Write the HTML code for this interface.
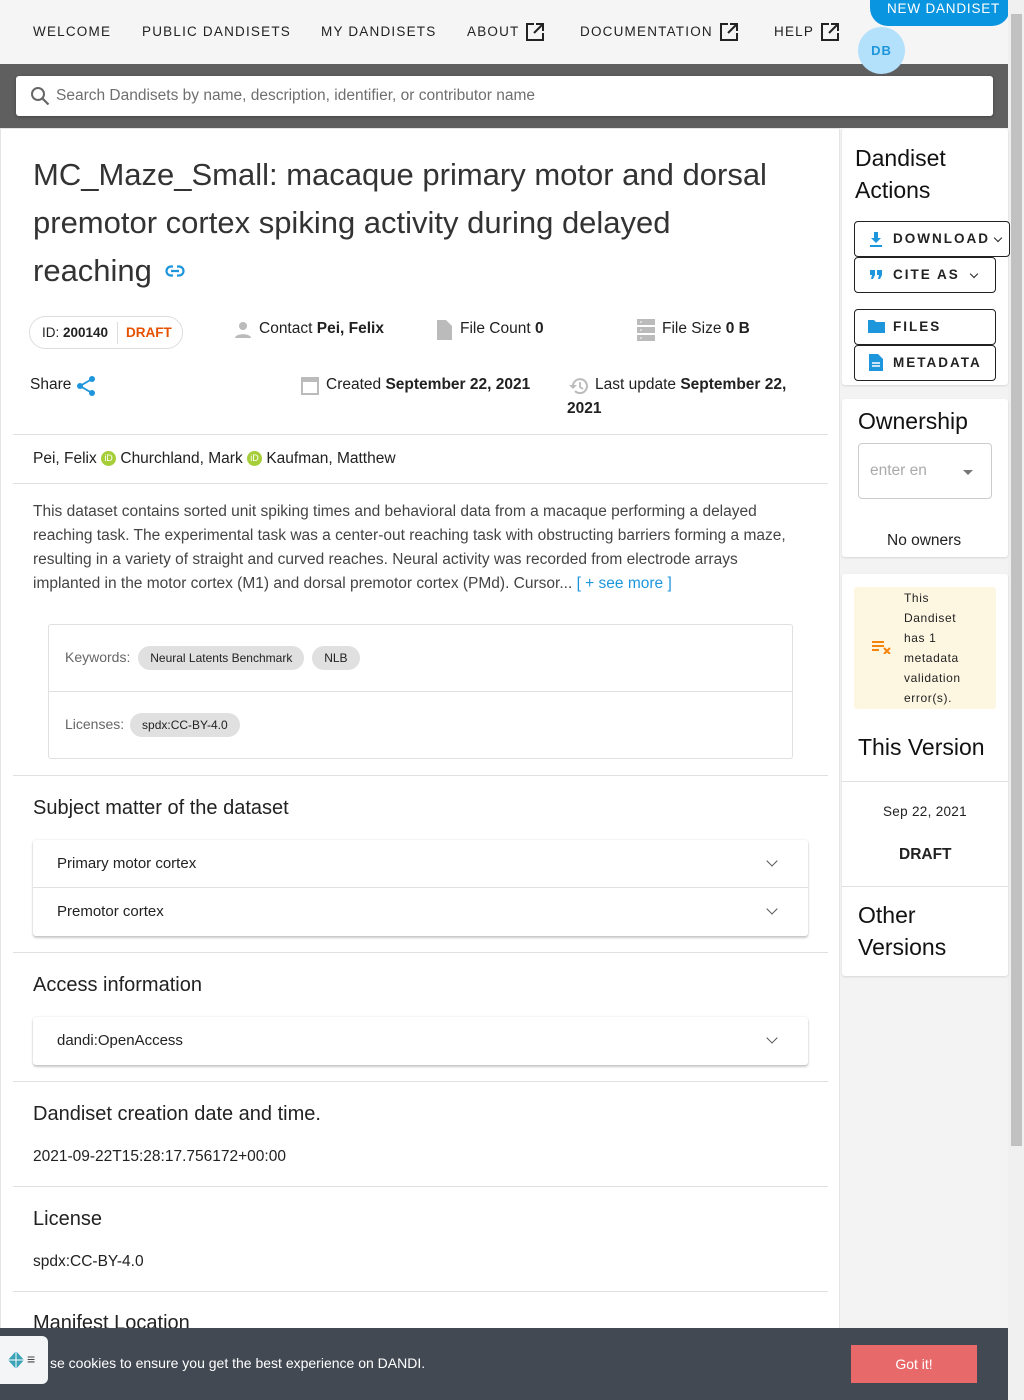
<!DOCTYPE html>
<html><head><meta charset="utf-8"><style>
*{box-sizing:border-box;margin:0;padding:0}
body{width:1024px;height:1400px;overflow:hidden;position:relative;background:#f3f3f3;font-family:"Liberation Sans",sans-serif;color:#212121}
.a{position:absolute;white-space:nowrap}
.nav{top:24px;font-size:13.5px;letter-spacing:1.2px;font-weight:500;color:#222}
.hr{position:absolute;left:13px;width:815px;height:1px;background:#e0e0e0}
.h2{font-size:20px;color:#222}
.exp{position:absolute;left:33px;width:775px;background:#fff;box-shadow:0 2px 2px rgba(0,0,0,.2),0 0 2px rgba(0,0,0,.12);border-radius:3px}
.row{height:48px;position:relative;font-size:15px;line-height:48px;padding-left:24px;color:#222}
.chev{position:absolute;right:32px;top:17px;width:8px;height:8px;border-right:1.5px solid #555;border-bottom:1.5px solid #555;transform:rotate(45deg)}
.chip{display:inline-block;background:#e0e0e0;border-radius:12px;font-size:12px;padding:0 12px;height:24px;line-height:24px;color:#222}
.btn{position:absolute;left:854px;width:142px;height:36px;border:1px solid #222;border-radius:4px;background:#fff;font-size:13.5px;font-weight:bold;letter-spacing:2px;line-height:34px;padding-left:38px;color:#222}
.sch{position:absolute;top:13px;width:6px;height:6px;border-right:1.5px solid #222;border-bottom:1.5px solid #222;transform:rotate(45deg)}
.card{position:absolute;left:842px;width:166px;background:#fff;border-radius:3px;box-shadow:0 1px 2px rgba(0,0,0,.12)}
</style></head><body>
<!-- header -->
<div class="a" style="left:0;top:0;width:1008px;height:64px;background:#f5f5f5"></div>
<div class="a nav" style="left:33px">WELCOME</div>
<div class="a nav" style="left:142px">PUBLIC DANDISETS</div>
<div class="a nav" style="left:321px">MY DANDISETS</div>
<div class="a nav" style="left:467px">ABOUT</div>
<div class="a nav" style="left:580px">DOCUMENTATION</div>
<div class="a nav" style="left:774px">HELP</div>
<svg class="a" style="left:525px;top:22px" width="20" height="20" viewBox="0 0 20 20"><path d="M9 2H2v16h16v-7M11 2h7v7M18 2l-9 9" fill="none" stroke="#222" stroke-width="2"/></svg>
<svg class="a" style="left:719px;top:22px" width="20" height="20" viewBox="0 0 20 20"><path d="M9 2H2v16h16v-7M11 2h7v7M18 2l-9 9" fill="none" stroke="#222" stroke-width="2"/></svg>
<svg class="a" style="left:820px;top:22px" width="20" height="20" viewBox="0 0 20 20"><path d="M9 2H2v16h16v-7M11 2h7v7M18 2l-9 9" fill="none" stroke="#222" stroke-width="2"/></svg>
<!-- search band -->
<div class="a" style="left:0;top:64px;width:1008px;height:64px;background:#5f5f5f"></div>
<div class="a" style="left:16px;top:76px;width:977px;height:40px;background:#fff;border-radius:3px;box-shadow:0 1px 3px rgba(0,0,0,.3)"></div>
<svg class="a" style="left:30px;top:86px" width="20" height="20" viewBox="0 0 20 20"><circle cx="8" cy="8" r="6" fill="none" stroke="#666" stroke-width="2"/><path d="M12.5 12.5l6 6" stroke="#666" stroke-width="2.2"/></svg>
<div class="a" style="left:56px;top:87px;font-size:15.5px;color:#6f6f6f">Search Dandisets by name, description, identifier, or contributor name</div>
<div class="a" style="left:870px;top:-10px;width:140px;height:36px;background:#0a95e0;border-radius:0 0 18px 18px;color:#fff;font-size:13.5px;letter-spacing:.8px;font-weight:500;padding:11px 0 0 17px">NEW DANDISET</div>
<div class="a" style="left:858px;top:27px;width:47px;height:47px;border-radius:50%;background:#b3e0fa;color:#1e96dc;font-size:13px;font-weight:bold;text-align:center;line-height:47px;letter-spacing:1px">DB</div>
<!-- scrollbar -->
<div class="a" style="left:1008px;top:0;width:16px;height:1400px;background:#f0f0f0"></div>
<div class="a" style="left:1011px;top:14px;width:11px;height:1132px;background:#c1c1c1"></div>
<!-- main card -->
<div class="a" style="left:0;top:128px;width:840px;height:1272px;background:#fff;border:1px solid #e4e4e4"></div>
<div class="a" style="left:33px;top:151px;font-size:31px;line-height:48px;color:#333">MC_Maze_Small: macaque primary motor and dorsal<br>premotor cortex spiking activity during delayed<br>reaching</div>
<svg class="a" style="left:165px;top:264px" width="20" height="14" viewBox="0 0 20 14"><rect x="1.5" y="2.5" width="17" height="9" rx="4.5" fill="none" stroke="#1e96dc" stroke-width="2.2"/><path d="M6 7h8" stroke="#1e96dc" stroke-width="2.2"/><rect x="8" y="0" width="4" height="14" fill="#fff"/><path d="M6 7h8" stroke="#1e96dc" stroke-width="2.2"/></svg>
<div class="a" style="left:29px;top:316px;width:154px;height:33px;border:1px solid #ddd;border-radius:17px"></div>
<div class="a" style="left:42px;top:325px;font-size:13.5px;color:#222">ID: <b>200140</b></div>
<div class="a" style="left:117px;top:322px;width:1px;height:22px;background:#ddd"></div>
<div class="a" style="left:126px;top:325px;font-size:13.5px;color:#e65100;font-weight:bold">DRAFT</div>
<svg class="a" style="left:233px;top:320px" width="20" height="20" viewBox="0 0 20 20"><circle cx="10" cy="6" r="4" fill="#bbb"/><path d="M2 18c0-5 16-5 16 0z" fill="#bbb"/></svg>
<div class="a" style="left:259px;top:320px;font-size:15.5px">Contact <b>Pei, Felix</b></div>
<svg class="a" style="left:435px;top:319px" width="18" height="22" viewBox="0 0 18 22"><path d="M2 1h9l6 6v14H2z" fill="#bbb"/></svg>
<div class="a" style="left:460px;top:320px;font-size:15.5px">File Count <b>0</b></div>
<svg class="a" style="left:636px;top:318px" width="20" height="24" viewBox="0 0 20 24"><rect x="1" y="1" width="18" height="6" fill="#bbb"/><rect x="1" y="9" width="18" height="6" fill="#bbb"/><rect x="1" y="17" width="18" height="6" fill="#bbb"/><path d="M4 4h2M4 12h2M4 20h2" stroke="#fff"/></svg>
<div class="a" style="left:662px;top:320px;font-size:15.5px">File Size <b>0 B</b></div>
<div class="a" style="left:30px;top:376px;font-size:15.5px">Share</div>
<svg class="a" style="left:76px;top:375px" width="20" height="22" viewBox="0 0 20 22"><circle cx="16" cy="4" r="3" fill="#1e96dc"/><circle cx="4" cy="11" r="3" fill="#1e96dc"/><circle cx="16" cy="18" r="3" fill="#1e96dc"/><path d="M16 4L4 11l12 7" stroke="#1e96dc" stroke-width="1.8" fill="none"/></svg>
<svg class="a" style="left:300px;top:375px" width="20" height="20" viewBox="0 0 20 20"><rect x="2" y="3" width="16" height="16" fill="none" stroke="#bbb" stroke-width="2"/><rect x="2" y="3" width="16" height="4" fill="#bbb"/></svg>
<div class="a" style="left:326px;top:376px;font-size:15.5px">Created <b>September 22, 2021</b></div>
<svg class="a" style="left:568px;top:376px" width="22" height="20" viewBox="0 0 22 20"><path d="M5 10a7 7 0 1 1 2 5" fill="none" stroke="#bbb" stroke-width="2"/><path d="M1 9l4 4 4-4z" fill="#bbb"/><path d="M12 6v5l3 2" stroke="#bbb" stroke-width="1.8" fill="none"/></svg>
<div class="a" style="left:595px;top:376px;font-size:15.5px">Last update <b>September 22,</b></div>
<div class="a" style="left:567px;top:400px;font-size:15.5px;font-weight:bold">2021</div>
<div class="hr" style="top:434px"></div>
<div class="a" style="left:33px;top:450px;font-size:15.5px">Pei, Felix <span style="display:inline-block;width:15px;height:15px;border-radius:50%;background:#a6ce39;color:#fff;font-size:9px;text-align:center;line-height:15px;vertical-align:2px">iD</span> Churchland, Mark <span style="display:inline-block;width:15px;height:15px;border-radius:50%;background:#a6ce39;color:#fff;font-size:9px;text-align:center;line-height:15px;vertical-align:2px">iD</span> Kaufman, Matthew</div>
<div class="hr" style="top:483px"></div>
<div class="a" style="left:33px;top:500px;font-size:15.5px;line-height:24px;color:#444">This dataset contains sorted unit spiking times and behavioral data from a macaque performing a delayed<br>reaching task. The experimental task was a center-out reaching task with obstructing barriers forming a maze,<br>resulting in a variety of straight and curved reaches. Neural activity was recorded from electrode arrays<br>implanted in the motor cortex (M1) and dorsal premotor cortex (PMd). Cursor... <span style="color:#1e96dc">[ + see more ]</span></div>
<div class="a" style="left:48px;top:624px;width:745px;height:135px;border:1px solid #e0e0e0;border-radius:3px"></div>
<div class="a" style="left:49px;top:691px;width:743px;height:1px;background:#e0e0e0"></div>
<div class="a" style="left:65px;top:646px;font-size:14px;color:#666">Keywords: <span class="chip" style="margin-left:4px">Neural Latents Benchmark</span> <span class="chip" style="margin-left:4px">NLB</span></div>
<div class="a" style="left:65px;top:713px;font-size:14px;color:#666">Licenses: <span class="chip" style="margin-left:2px">spdx:CC-BY-4.0</span></div>
<div class="hr" style="top:775px"></div>
<div class="a h2" style="left:33px;top:797px">Subject matter of the dataset</div>
<div class="exp" style="top:840px"><div class="row" style="border-bottom:1px solid #e0e0e0">Primary motor cortex<div class="chev"></div></div><div class="row">Premotor cortex<div class="chev"></div></div></div>
<div class="hr" style="top:952px"></div>
<div class="a h2" style="left:33px;top:974px">Access information</div>
<div class="exp" style="top:1017px"><div class="row">dandi:OpenAccess<div class="chev"></div></div></div>
<div class="hr" style="top:1081px"></div>
<div class="a h2" style="left:33px;top:1103px">Dandiset creation date and time.</div>
<div class="a" style="left:33px;top:1148px;font-size:15.5px">2021-09-22T15:28:17.756172+00:00</div>
<div class="hr" style="top:1186px"></div>
<div class="a h2" style="left:33px;top:1208px">License</div>
<div class="a" style="left:33px;top:1253px;font-size:15.5px">spdx:CC-BY-4.0</div>
<div class="hr" style="top:1291px"></div>
<div class="a h2" style="left:33px;top:1312px">Manifest Location</div>
<!-- sidebar -->
<div class="card" style="top:129px;height:256px"></div>
<div class="a" style="left:855px;top:142px;font-size:23px;line-height:32px;color:#111">Dandiset<br>Actions</div>
<div class="btn" style="top:221px;width:156px">DOWNLOAD<div class="sch" style="left:140px"></div></div>
<svg class="a" style="left:869px;top:231px" width="14" height="16" viewBox="0 0 14 16"><path d="M5 1h4v6h3l-5 5-5-5h3z M1 14h12v2H1z" fill="#1e96dc"/></svg>
<div class="btn" style="top:257px">CITE AS<div class="sch" style="left:116px"></div></div>
<svg class="a" style="left:870px;top:270px" width="12" height="9" viewBox="0 0 12 9"><path d="M0 0h5v5l-2 4H1l1-4H0zM7 0h5v5l-2 4H8l1-4H7z" fill="#1e96dc"/></svg>
<div class="btn" style="top:309px">FILES</div>
<svg class="a" style="left:868px;top:319px" width="17" height="14" viewBox="0 0 17 14"><path d="M0 1h6l2 2h9v11H0z" fill="#1e96dc"/></svg>
<div class="btn" style="top:345px">METADATA</div>
<svg class="a" style="left:869px;top:354px" width="14" height="17" viewBox="0 0 14 17"><path d="M0 0h9l5 5v12H0z" fill="#1e96dc"/><path d="M3 9h8M3 12h8" stroke="#fff" stroke-width="1.4"/></svg>
<div class="card" style="top:399px;height:158px"></div>
<div class="a" style="left:858px;top:408px;font-size:23px;color:#111">Ownership</div>
<div class="a" style="left:858px;top:443px;width:134px;height:56px;border:1px solid #ccc;border-radius:4px"></div>
<div class="a" style="left:870px;top:462px;font-size:15.5px;color:#aaa">enter en</div>
<div class="a" style="left:963px;top:470px;border-left:5px solid transparent;border-right:5px solid transparent;border-top:5px solid #777"></div>
<div class="a" style="left:887px;top:532px;font-size:15.5px">No owners</div>
<div class="card" style="top:574px;height:402px"></div>
<div class="a" style="left:854px;top:587px;width:142px;height:122px;background:#fdf6e1;border-radius:3px"></div>
<svg class="a" style="left:872px;top:640px" width="20" height="14" viewBox="0 0 20 14"><path d="M0 2h12M0 6h12M0 10h7" stroke="#f5840c" stroke-width="2"/><path d="M12 8l6 6M18 8l-6 6" stroke="#f5840c" stroke-width="2"/></svg>
<div class="a" style="left:904px;top:588px;font-size:12px;line-height:20px;letter-spacing:.6px;color:#222">This<br>Dandiset<br>has 1<br>metadata<br>validation<br>error(s).</div>
<div class="a" style="left:858px;top:734px;font-size:23px;color:#111">This Version</div>
<div class="a" style="left:842px;top:781px;width:166px;height:1px;background:#e0e0e0"></div>
<div class="a" style="left:883px;top:804px;font-size:13.5px;letter-spacing:.3px">Sep 22, 2021</div>
<div class="a" style="left:899px;top:846px;font-size:15.5px;font-weight:bold">DRAFT</div>
<div class="a" style="left:842px;top:886px;width:166px;height:1px;background:#e0e0e0"></div>
<div class="a" style="left:858px;top:899px;font-size:23px;line-height:32px;color:#111">Other<br>Versions</div>
<!-- cookie -->
<div class="a" style="left:0;top:1328px;width:1008px;height:72px;background:#424953"></div>
<div class="a" style="left:50px;top:1355px;font-size:14px;color:#fff">se cookies to ensure you get the best experience on DANDI.</div>
<div class="a" style="left:851px;top:1345px;width:126px;height:38px;background:#e8696a;color:#fff;font-size:14px;text-align:center;line-height:38px">Got it!</div>
<div class="a" style="left:0;top:1336px;width:48px;height:48px;background:#f4f5f7;border-radius:0 6px 6px 0"></div>
<svg class="a" style="left:6px;top:1350px" width="20" height="20" viewBox="0 0 20 20"><path d="M10 1l8 9-8 9-8-9z" fill="#3aa3b8"/><path d="M10 1v18M2 10h16" stroke="#fff" stroke-width="1"/></svg>
<div class="a" style="left:27px;top:1351px;font-size:14px;color:#444">&#8801;</div>
</body></html>
